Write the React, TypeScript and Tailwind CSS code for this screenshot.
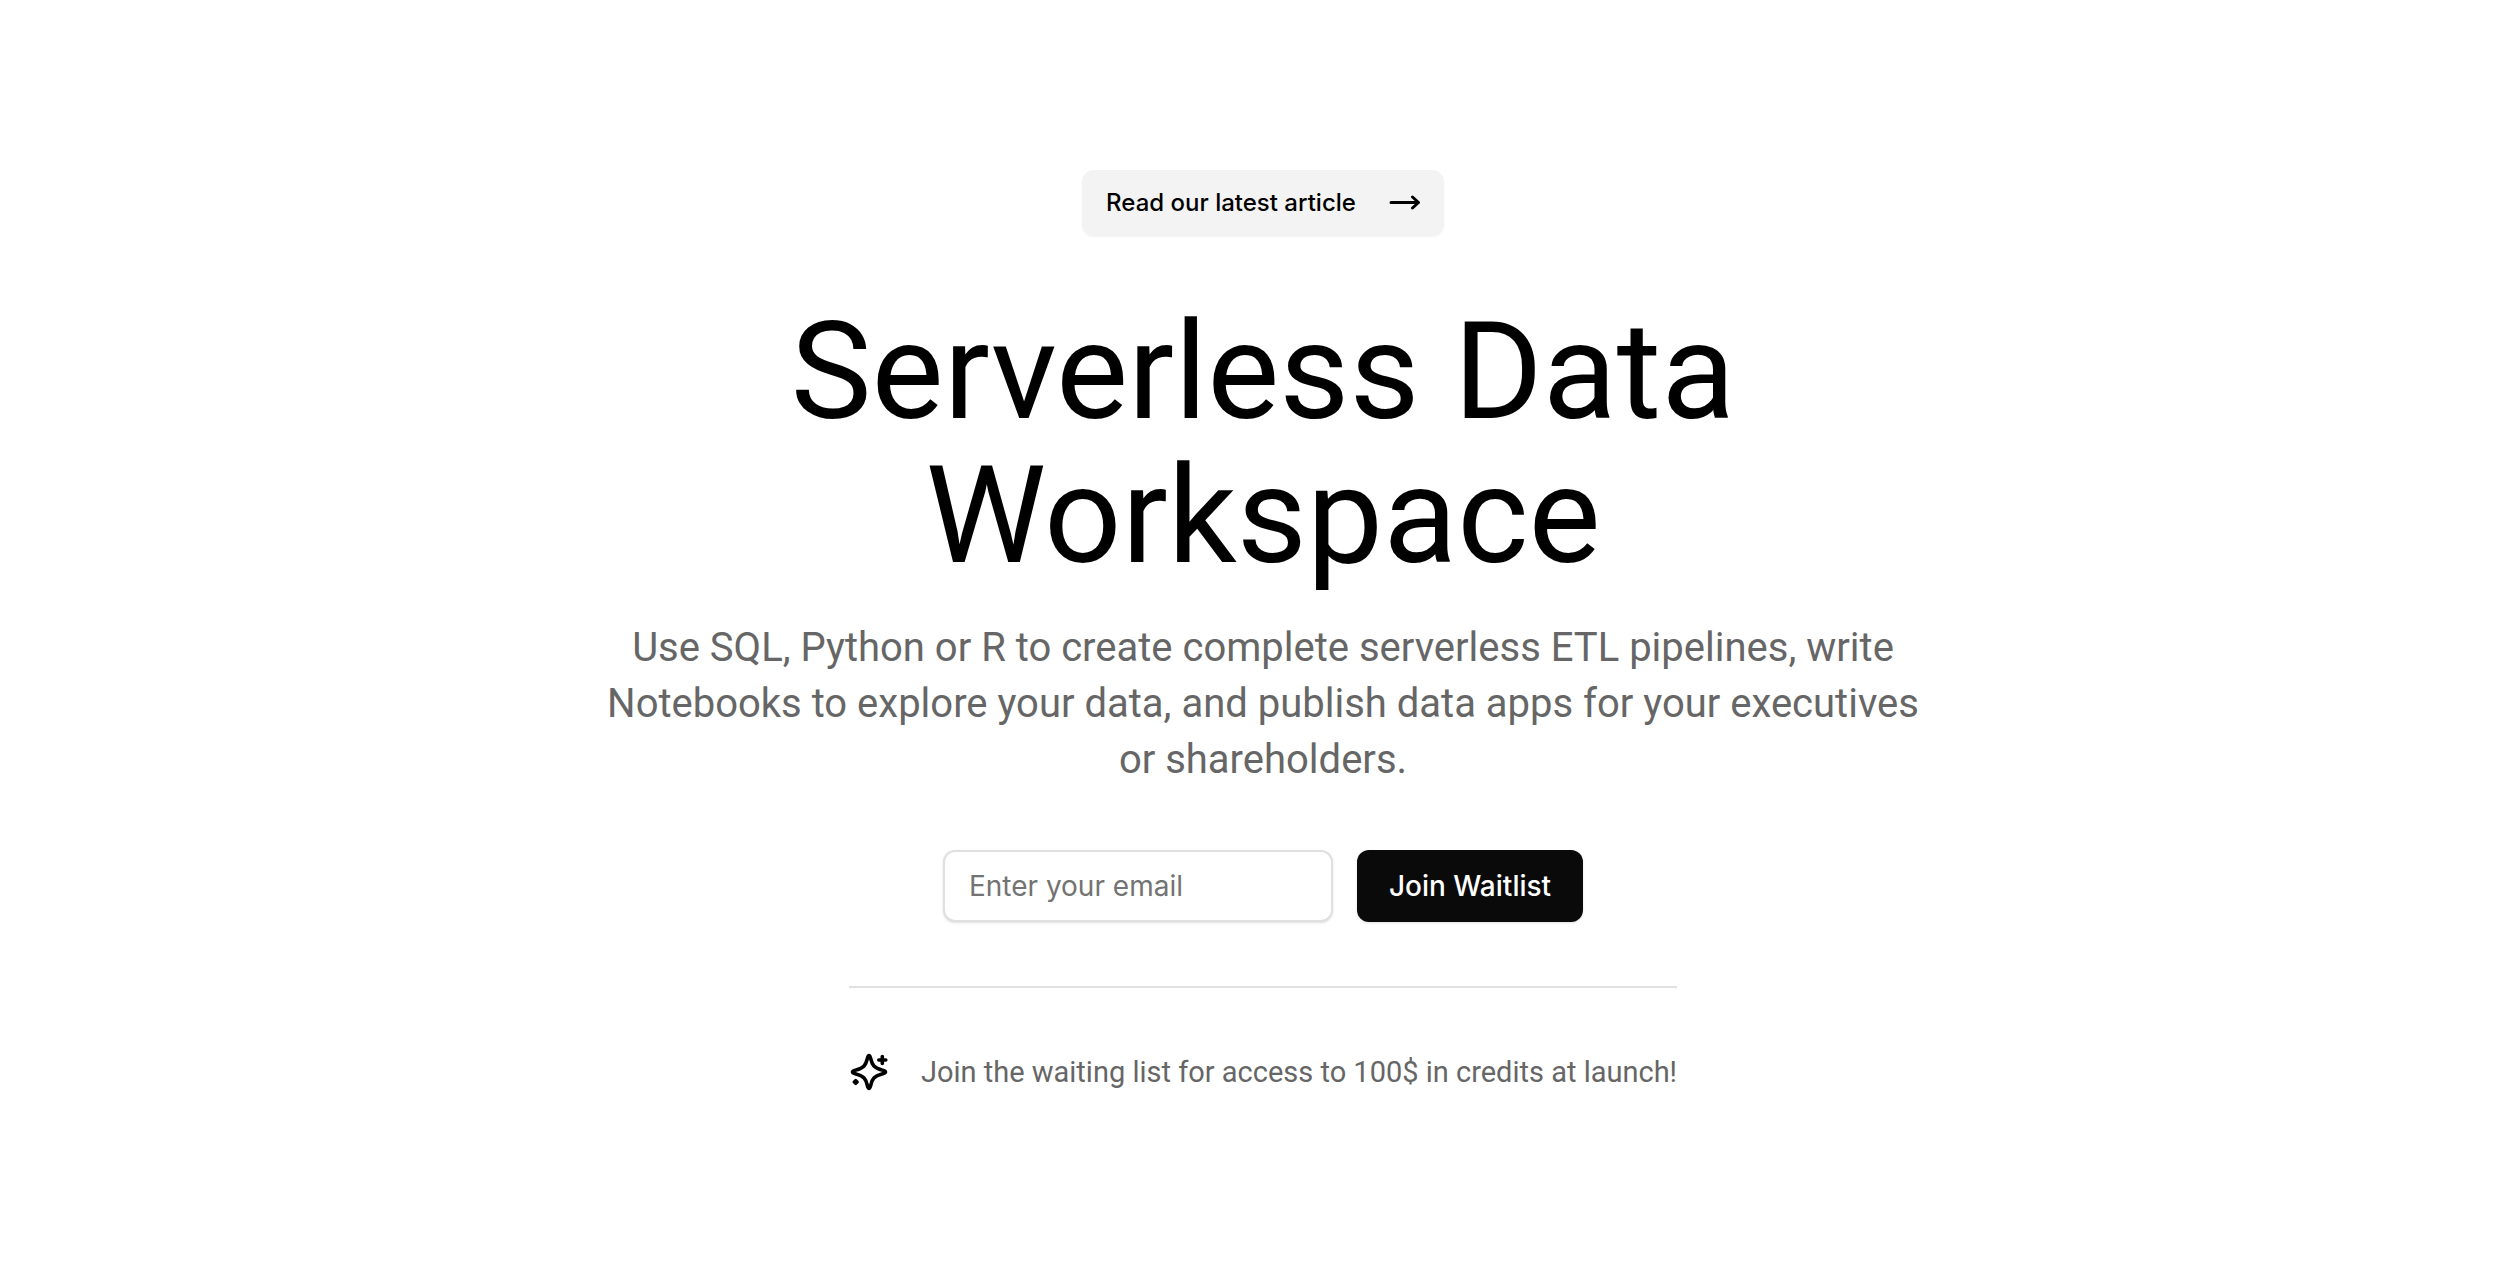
import React from "react";

function ArrowIcon() {
  return (
    <svg viewBox="0 0 32 16" className="h-4 w-8" fill="none" stroke="currentColor" strokeWidth="3" strokeLinecap="round" strokeLinejoin="round" aria-hidden="true">
      <path d="M3 7.500H30M24.500 2 30.500 7.500l-6 5.500" />
    </svg>
  );
}

function SparklesIcon() {
  return (
    <svg viewBox="0 0 40 40" className="size-10 shrink-0" aria-hidden="true">
      <path
        d="M20 3.500C21 3.500 21.300 5 21.800 7C23.200 13 25 15.800 33 18C35 18.500 36.500 19 36.500 20C36.500 21 35 21.500 33 22C25 24.200 23.200 27 21.800 33C21.300 35 21 36.500 20 36.500C19 36.500 18.700 35 18.200 33C16.800 27 15 24.200 7 22C5 21.500 3.500 21 3.500 20C3.500 19 5 18.500 7 18C15 15.800 16.800 13 18.200 7C18.700 5 19 3.500 20 3.500Z"
        fill="none"
        stroke="currentColor"
        strokeWidth="3.600"
        strokeLinejoin="round"
      />
      <path d="M33.300 4.500v7M29.800 8h7" stroke="currentColor" strokeWidth="3.600" strokeLinecap="round" />
      <path d="M6.700 28.200 8.500 30 6.700 31.800 4.900 30Z" fill="currentColor" stroke="currentColor" strokeWidth="2.800" strokeLinejoin="round" />
    </svg>
  );
}

export default function App() {
  return (
    <main className="flex min-h-screen flex-col items-center bg-white pt-[170px] pr-6 pb-20 pl-[34px] font-['Inter',sans-serif] text-black">
      <a href="#article" className="flex h-[66px] items-center gap-8 rounded-xl bg-[#f3f3f3] px-6 text-2xl font-medium shadow-xs">
        Read our latest article
        <ArrowIcon />
      </a>

      <h1 className="mt-16 max-w-[1320px] text-center font-['Roboto',sans-serif] text-[136px] leading-[144px] font-normal">
        Serverless Data
        <br />
        Workspace
      </h1>

      <p className="mt-8 max-w-[1344px] text-center font-['Roboto',sans-serif] text-[40px] leading-[56px] text-[#666666]">
        Use SQL, Python or R to create complete serverless ETL pipelines, write Notebooks to explore your data, and publish data apps for your executives or shareholders.
      </p>

      <form className="mt-[62px] flex gap-6" onSubmit={(e: React.FormEvent) => e.preventDefault()}>
        <input
          type="email"
          aria-label="Email"
          placeholder="Enter your email"
          className="h-[72px] w-[390px] rounded-xl border-2 border-[#e0e0e0] bg-white px-6 text-[28px] shadow-sm placeholder:text-[#737373]"
        />
        <button type="submit" className="h-[72px] rounded-xl bg-[#0a0a0a] px-8 text-[28px] font-medium text-white shadow-sm">
          Join Waitlist
        </button>
      </form>

      <div className="mt-16 flex items-center gap-8 border-t-2 border-[#e0e0e0] pt-16">
        <SparklesIcon />
        <p className="font-['Roboto',sans-serif] text-[29px] leading-10 text-[#666666]">Join the waiting list for access to 100$ in credits at launch!</p>
      </div>
    </main>
  );
}
